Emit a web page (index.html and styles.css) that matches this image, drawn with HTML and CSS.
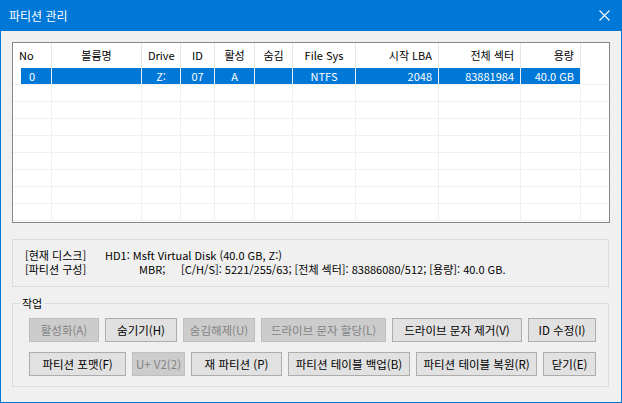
FILE: index.html
```html
<!DOCTYPE html>
<html lang="ko">
<head>
<meta charset="utf-8">
<title>파티션 관리</title>
<link rel="stylesheet" href="styles.css">
</head>
<body>
<div class="window">
  <div class="titlebar">
    <span class="title">파티션 관리</span>
    <svg class="close" width="11" height="11" viewBox="0 0 11 11"><path d="M0.5 0.5 L10.5 10.5 M10.5 0.5 L0.5 10.5" stroke="#fff" stroke-width="1.1" fill="none"/></svg>
  </div>

  <div class="list">
    <div class="head">
      <div class="c w1 l">No</div>
      <div class="c w2 ctr">볼륨명</div>
      <div class="c w3 ctr">Drive</div>
      <div class="c w4 ctr">ID</div>
      <div class="c w5 ctr">활성</div>
      <div class="c w6 ctr">숨김</div>
      <div class="c w7 ctr">File Sys</div>
      <div class="c w8 r">시작 LBA</div>
      <div class="c w9 r">전체 섹터</div>
      <div class="c w10 r">용량</div>
    </div>
    <div class="row sel">
      <div class="c w1 first"><span class="hl">0</span></div>
      <div class="c w2 ctr"></div>
      <div class="c w3 ctr">Z:</div>
      <div class="c w4 ctr">07</div>
      <div class="c w5 ctr">A</div>
      <div class="c w6 ctr"></div>
      <div class="c w7 ctr">NTFS</div>
      <div class="c w8 r">2048</div>
      <div class="c w9 r">83881984</div>
      <div class="c w10 r">40.0 GB</div>
    </div>
    <div class="row"><div class="c w1"></div><div class="c w2"></div><div class="c w3"></div><div class="c w4"></div><div class="c w5"></div><div class="c w6"></div><div class="c w7"></div><div class="c w8"></div><div class="c w9"></div><div class="c w10"></div></div>
    <div class="row"><div class="c w1"></div><div class="c w2"></div><div class="c w3"></div><div class="c w4"></div><div class="c w5"></div><div class="c w6"></div><div class="c w7"></div><div class="c w8"></div><div class="c w9"></div><div class="c w10"></div></div>
    <div class="row"><div class="c w1"></div><div class="c w2"></div><div class="c w3"></div><div class="c w4"></div><div class="c w5"></div><div class="c w6"></div><div class="c w7"></div><div class="c w8"></div><div class="c w9"></div><div class="c w10"></div></div>
    <div class="row"><div class="c w1"></div><div class="c w2"></div><div class="c w3"></div><div class="c w4"></div><div class="c w5"></div><div class="c w6"></div><div class="c w7"></div><div class="c w8"></div><div class="c w9"></div><div class="c w10"></div></div>
    <div class="row"><div class="c w1"></div><div class="c w2"></div><div class="c w3"></div><div class="c w4"></div><div class="c w5"></div><div class="c w6"></div><div class="c w7"></div><div class="c w8"></div><div class="c w9"></div><div class="c w10"></div></div>
    <div class="row"><div class="c w1"></div><div class="c w2"></div><div class="c w3"></div><div class="c w4"></div><div class="c w5"></div><div class="c w6"></div><div class="c w7"></div><div class="c w8"></div><div class="c w9"></div><div class="c w10"></div></div>
    <div class="row"><div class="c w1"></div><div class="c w2"></div><div class="c w3"></div><div class="c w4"></div><div class="c w5"></div><div class="c w6"></div><div class="c w7"></div><div class="c w8"></div><div class="c w9"></div><div class="c w10"></div></div>
    <div class="row"><div class="c w1"></div><div class="c w2"></div><div class="c w3"></div><div class="c w4"></div><div class="c w5"></div><div class="c w6"></div><div class="c w7"></div><div class="c w8"></div><div class="c w9"></div><div class="c w10"></div></div>
  </div>

  <div class="info">
    <div class="info-line"><span class="lbl">[현재 디스크]</span><span class="val">HD1: Msft Virtual Disk (40.0 GB, Z:)</span></div>
    <div class="info-line"><span class="lbl">[파티션 구성]</span><span class="val"><span class="mbr">MBR;</span>[C/H/S]: 5221/255/63; [전체 섹터]: 83886080/512; [용량]: 40.0 GB.</span></div>
  </div>

  <fieldset class="group">
    <legend>작업</legend>
    <div class="btnrow">
      <button class="btn dis b-act" disabled>활성화(A)</button>
      <button class="btn b-hide">숨기기(H)</button>
      <button class="btn dis b-unhide" disabled>숨김해제(U)</button>
      <button class="btn dis b-assign" disabled>드라이브 문자 할당(L)</button>
      <button class="btn b-remove">드라이브 문자 제거(V)</button>
      <button class="btn b-id">ID 수정(I)</button>
    </div>
    <div class="btnrow second">
      <button class="btn b-format">파티션 포맷(F)</button>
      <button class="btn dis b-uv" disabled>U+ V2(2)</button>
      <button class="btn b-repart">재 파티션 (P)</button>
      <button class="btn b-backup">파티션 테이블 백업(B)</button>
      <button class="btn b-restore">파티션 테이블 복원(R)</button>
      <button class="btn b-close">닫기(E)</button>
    </div>
  </fieldset>
</div>
</body>
</html>
```

FILE: styles.css
```css
* { box-sizing: border-box; }
html, body { margin: 0; padding: 0; }
body {
  width: 622px;
  height: 403px;
  overflow: hidden;
  font-family: "Noto Sans CJK KR", sans-serif;
  font-size: 11px;
  color: #000;
  background: #f0f0f0;
}
.window {
  width: 622px;
  height: 403px;
  border: 1px solid #0078d7;
  border-top: none;
  background: #f0f0f0;
  display: flex;
  flex-direction: column;
}
.titlebar {
  height: 31px;
  flex: none;
  background: #0078d7;
  color: #fff;
  display: flex;
  align-items: center;
  justify-content: space-between;
  padding: 0 11px 0 8px;
}
.title { font-size: 12px; line-height: 16px; }
.close { display: block; }

/* list view */
.list {
  margin: 11px 11px 0 11px;
  height: 181px;
  flex: none;
  border: 1px solid #828790;
  background: #fff;
  overflow: hidden;
}
.head { display: flex; height: 25px; }
.row { display: flex; height: 17px; border-bottom: 1px solid #f0f0f0; }
.c {
  flex: none;
  border-right: 1px solid #f0f0f0;
  padding: 0 6px;
  line-height: 16px;
  white-space: nowrap;
  overflow: hidden;
}
.head .c { border-right-color: #e5e5e5; line-height: 24px; }
.l { text-align: left; }
.ctr { text-align: center; }
.r { text-align: right; }
.w1 { width: 39px; }
.w2 { width: 90px; }
.w3 { width: 39px; }
.w4 { width: 34px; }
.w5 { width: 40px; }
.w6 { width: 38px; }
.w7 { width: 63px; }
.w8 { width: 83px; }
.w9 { width: 82px; }
.w10 { width: 60px; }
.sel .c { background: #0078d7; color: #fff; }
.sel .c.first { background: #fff; padding: 0 0 0 8px; display: flex; }
.sel .hl { flex: 1; background: #0078d7; padding-left: 8px; }

/* info box */
.info {
  margin: 16px 12px 0 11px;
  height: 48px;
  flex: none;
  border: 1px solid #dadada;
  padding: 8px 0 0 12px;
}
.info-line { display: flex; line-height: 14px; height: 14px; white-space: nowrap; }
.lbl { width: 80px; flex: none; }
.mbr { display: inline-block; width: 76px; padding-left: 34px; }

/* group */
.group {
  margin: 9px 12px 0 11px;
  border: 1px solid #dcdcdc;
  padding: 8px 0 10px 16px;
  min-width: 0;
}
.group legend {
  padding: 0 2px;
  margin-left: -9px;
  line-height: 14px;
  font-size: 11px;
}
.btnrow { display: flex; gap: 6px; }
.btnrow.second { margin-top: 10px; }
.btn {
  height: 24px;
  font: inherit;
  font-size: 11.5px;
  color: #000;
  background: #e1e1e1;
  border: 1px solid #adadad;
  padding: 0;
  margin: 0;
  text-align: center;
  white-space: nowrap;
}
.btn.dis { background: #cccccc; border-color: #bfbfbf; color: #838383; }
.b-act { width: 70px; }
.b-hide { width: 72px; }
.b-unhide { width: 72px; }
.b-assign { width: 125px; }
.b-remove { width: 130px; }
.b-id { width: 68px; }
.b-format { width: 97px; }
.b-uv { width: 53px; }
.b-repart { width: 91px; }
.b-backup { width: 122px; }
.b-restore { width: 121px; }
.b-close { width: 53px; }
```
